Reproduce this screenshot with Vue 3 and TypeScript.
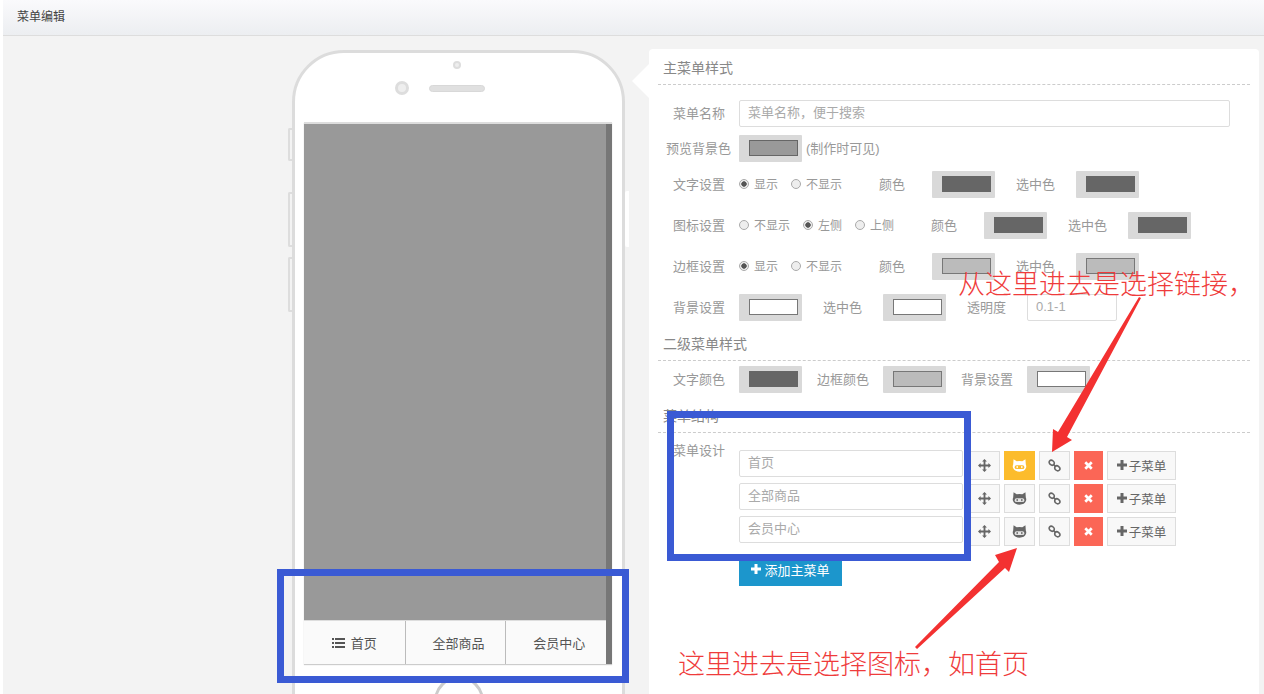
<template>
  <div class="page">
    <svg class="icon-defs" width="0" height="0">
      <symbol id="i-move" viewBox="0 0 14 14">
        <path d="M7 0 9.6 2.8H8v3.2h3.2V4.4L14 7l-2.8 2.6V8H8v3.2h1.6L7 14l-2.6-2.8H6V8H2.8v1.6L0 7l2.8-2.6V6H6V2.8H4.4z" fill="currentColor" />
      </symbol>
      <symbol id="i-cat" viewBox="0 0 16 14">
        <path d="M1.6.4 5 2.4Q8 1.9 11 2.4L14.4.4 14.8 6q.9 2 .1 3.8Q13.6 13.6 8 13.6T1.1 9.8Q.3 8 1.2 6Z" fill="currentColor" />
        <rect x="2.8" y="6.6" width="10.4" height="4.2" rx="2" fill="var(--face)" />
        <rect x="4.8" y="7.6" width="1.4" height="2.2" fill="currentColor" />
        <rect x="9.8" y="7.6" width="1.4" height="2.2" fill="currentColor" />
      </symbol>
      <symbol id="i-link" viewBox="0 0 14 14">
        <g fill="none" stroke="currentColor" stroke-width="1.7">
          <ellipse cx="4" cy="4" rx="3" ry="2.4" transform="rotate(40 4 4)" />
          <ellipse cx="10" cy="10" rx="3" ry="2.4" transform="rotate(40 10 10)" />
          <path d="M5.4 5.4 8.6 8.6" />
        </g>
      </symbol>
      <symbol id="i-times" viewBox="0 0 10 10">
        <path d="M1.4 1.4 8.6 8.6M8.6 1.4 1.4 8.6" stroke="currentColor" stroke-width="3" />
      </symbol>
      <symbol id="i-plus" viewBox="0 0 10 10">
        <path d="M5 0v10M0 5h10" stroke="currentColor" stroke-width="3" />
      </symbol>
    </svg>

    <header class="top-bar">菜单编辑</header>

    <main class="workspace">
      <div class="phone">
        <span class="side-key key-a" />
        <span class="side-key key-b" />
        <span class="side-key key-c" />
        <span class="side-key key-d" />
        <span class="phone-dot" />
        <div class="phone-ear">
          <span class="phone-camera" />
          <span class="phone-speaker" />
        </div>
        <div class="screen">
          <div class="screen-main">
            <div class="screen-canvas" />
            <nav class="phone-nav">
              <div v-for="(item, i) in navItems" :key="item" class="nav-cell">
                <svg v-if="i === 0" class="nav-list" viewBox="0 0 13 10">
                  <path d="M0 1h2M3 1h10M0 5h2M3 5h10M0 9h2M3 9h10" stroke="currentColor" stroke-width="2" />
                </svg>
                {{ item }}
              </div>
            </nav>
          </div>
          <div class="screen-scroll" />
        </div>
        <div class="home-key" />
      </div>

      <section class="panel">
        <h3 class="section-title">主菜单样式</h3>

        <div class="row row-first">
          <label class="row-label">菜单名称</label>
          <input class="text-input name-input" placeholder="菜单名称，便于搜索" />
        </div>

        <div class="row row-preview">
          <label class="row-label">预览背景色</label>
          <span class="swatch"><i :style="{ background: '#999', borderColor: '#666' }" /></span>
          <span class="hint">(制作时可见)</span>
        </div>

        <div v-for="row in styleRows" :key="row.label" class="row row-style">
          <label class="row-label">{{ row.label }}</label>
          <span v-for="opt in row.options" :key="opt.text" class="radio">
            <span :class="['radio-dot', opt.on ? 'radio-on' : '']" />{{ opt.text }}
          </span>
          <span class="txt txt-color">颜色</span>
          <span class="swatch"><i :style="{ background: row.color, borderColor: row.edge }" /></span>
          <span class="txt txt-sel">选中色</span>
          <span class="swatch"><i :style="{ background: row.color, borderColor: row.edge }" /></span>
        </div>

        <div class="row row-style">
          <label class="row-label">背景设置</label>
          <span class="swatch"><i /></span>
          <span class="txt txt-sel">选中色</span>
          <span class="swatch"><i /></span>
          <span class="txt txt-sel">透明度</span>
          <input class="text-input alpha-input" placeholder="0.1-1" />
        </div>

        <h3 class="section-title title-sub">二级菜单样式</h3>

        <div class="row row-sub">
          <label class="row-label">文字颜色</label>
          <span class="swatch"><i :style="{ background: '#666', borderColor: '#666' }" /></span>
          <span class="txt txt-sub">边框颜色</span>
          <span class="swatch"><i :style="{ background: '#bbb', borderColor: '#777' }" /></span>
          <span class="txt txt-sub">背景设置</span>
          <span class="swatch"><i /></span>
        </div>

        <h3 class="section-title title-sub">菜单结构</h3>

        <div class="design">
          <label class="row-label design-label">菜单设计</label>
          <div class="design-rows">
            <div v-for="(name, i) in navItems" :key="name" class="menu-row">
              <input class="text-input menu-input" :placeholder="name" />
              <button class="tool tool-move">
                <svg class="ico"><use href="#i-move" /></svg>
              </button>
              <button :class="['tool', i === 0 ? 'tool-active' : '']">
                <svg class="ico ico-cat"><use href="#i-cat" /></svg>
              </button>
              <button class="tool">
                <svg class="ico ico-link"><use href="#i-link" /></svg>
              </button>
              <button class="tool tool-del">
                <svg class="ico ico-small"><use href="#i-times" /></svg>
              </button>
              <button class="tool tool-sub">
                <svg class="ico ico-plus"><use href="#i-plus" /></svg>子菜单
              </button>
            </div>
            <button class="add-main">
              <svg class="ico ico-plus"><use href="#i-plus" /></svg>添加主菜单
            </button>
          </div>
        </div>
      </section>
    </main>

    <!-- 截图上的标注 -->
    <div class="mark mark-phone" />
    <div class="mark mark-menu" />
    <svg class="arrows" viewBox="0 0 1264 694" width="1264" height="694">
      <polygon points="1139,297 1141,298 1067,437 1072,440 1052,452 1053,429 1058,432" fill="#f33131" />
      <polygon points="915,647 917,649 1005,568 1009,572 1017,548 995,555 999,562" fill="#f33131" />
    </svg>
    <div class="note note-link">从这里进去是选择链接，</div>
    <div class="note note-icon">这里进去是选择图标，如首页</div>
  </div>
</template>

<script setup lang="ts">
const navItems = ["首页", "全部商品", "会员中心"];

const styleRows = [
  {
    label: "文字设置",
    options: [
      { text: "显示", on: true },
      { text: "不显示", on: false },
    ],
    color: "#666",
    edge: "#666",
  },
  {
    label: "图标设置",
    options: [
      { text: "不显示", on: false },
      { text: "左侧", on: true },
      { text: "上侧", on: false },
    ],
    color: "#666",
    edge: "#666",
  },
  {
    label: "边框设置",
    options: [
      { text: "显示", on: true },
      { text: "不显示", on: false },
    ],
    color: "#bbb",
    edge: "#777",
  },
];
</script>

<style>
html,
body {
  margin: 0;
  overflow: hidden;
}
</style>

<style scoped>
.page {
  position: relative;
  width: 1264px;
  height: 694px;
  overflow: hidden;
  box-sizing: border-box;
  border-left: 3px solid #fff;
  background: #f3f3f3;
  font-family: "Liberation Sans", "Noto Sans CJK SC", sans-serif;
  font-size: 13px;
  color: #999;
}

.icon-defs {
  position: absolute;
}

.top-bar {
  height: 36px;
  box-sizing: border-box;
  padding-left: 14px;
  line-height: 35px;
  font-size: 12px;
  color: #444;
  background: linear-gradient(#fafafc, #eceef1);
  border-bottom: 1px solid #ddd;
}

.workspace {
  display: flex;
  align-items: flex-start;
  padding: 13px 0 0 289px;
}

/* phone */
.phone {
  position: relative;
  flex: none;
  display: flex;
  flex-direction: column;
  align-items: stretch;
  box-sizing: border-box;
  width: 333px;
  height: 720px;
  margin-top: 1px;
  border: 3px solid #dcdcdc;
  border-radius: 52px 52px 0 0;
  background: #fff;
}

.side-key {
  position: absolute;
  left: -7px;
  width: 4px;
  box-sizing: border-box;
  border: 2px solid #ddd;
  border-right: none;
  border-radius: 2px 0 0 2px;
}

.key-a {
  top: 75px;
  height: 33px;
}

.key-b {
  top: 139px;
  height: 55px;
}

.key-c {
  top: 204px;
  height: 55px;
}

.key-d {
  left: auto;
  right: -7px;
  top: 138px;
  height: 56px;
  background: #fff;
  border: none;
}

.phone-dot {
  align-self: center;
  width: 8px;
  height: 8px;
  box-sizing: border-box;
  margin: 8px 4px 0 0;
  border: 2px solid #ddd;
  background: #eee;
  border-radius: 50%;
}

.phone-ear {
  display: flex;
  align-items: center;
  justify-content: center;
  gap: 20px;
  height: 16px;
  margin-top: 11px;
  padding-right: 37px;
}

.phone-camera {
  width: 14px;
  height: 14px;
  box-sizing: border-box;
  border: 3px solid #ddd;
  background: #eee;
  border-radius: 50%;
}

.phone-speaker {
  width: 56px;
  height: 7px;
  background: #e0e0e0;
  border: 1px solid #d8d8d8;
  box-sizing: border-box;
  border-radius: 4px;
}

.screen {
  display: flex;
  height: 542px;
  margin: 26px 10px 0 9px;
  box-sizing: border-box;
  border-top: 2px solid #ddd;
  box-shadow: 0 1px 1px #ccc;
}

.screen-main {
  flex: 1;
  min-width: 0;
  display: flex;
  flex-direction: column;
}

.screen-canvas {
  flex: 1;
  background: #999;
}

.phone-nav {
  display: flex;
  height: 44px;
  background: #fafafa;
  border-top: 1px solid #ddd;
  box-sizing: border-box;
  color: #555;
  font-size: 13px;
}

.nav-cell {
  flex: 0 0 33.33%;
  box-sizing: border-box;
  display: flex;
  align-items: center;
  justify-content: center;
  gap: 6px;
  padding-left: 6px;
  border-left: 1px solid #bbb;
}

.nav-cell:first-child {
  padding-left: 0;
  border-left: none;
}

.nav-list {
  width: 13px;
  height: 10px;
}

.screen-scroll {
  width: 6px;
  background: #777;
}

.home-key {
  align-self: center;
  width: 50px;
  height: 50px;
  margin-top: 12px;
  box-sizing: border-box;
  border: 3px solid #ccc;
  border-radius: 50%;
}

/* panel */
.panel {
  position: relative;
  flex: none;
  box-sizing: border-box;
  width: 610px;
  height: 660px;
  margin-left: 24px;
  padding: 0 9px;
  background: #fff;
  border-radius: 4px;
}

.panel::before {
  content: "";
  position: absolute;
  left: -17px;
  top: 15px;
  border: 17px solid transparent;
  border-left: none;
  border-right-color: #fff;
}

.section-title {
  margin: 0;
  height: 36px;
  box-sizing: border-box;
  padding: 10px 0 0 5px;
  line-height: 18px;
  font-size: 14px;
  font-weight: normal;
  color: #888;
  border-bottom: 1px dashed #ccc;
}

.title-sub {
  margin-top: 4px;
}

.row {
  display: flex;
  align-items: center;
  min-height: 27px;
}

.row-first {
  margin-top: 15px;
}

.row-preview {
  margin-top: 8px;
}

.row-style {
  margin-top: 14px;
}

.row-preview + .row-style {
  margin-top: 9px;
}

.row-sub {
  margin-top: 5px;
}

.row-label,
.txt,
.hint,
.radio {
  padding-bottom: 2px;
}

.row-label {
  flex: none;
  width: 67px;
  margin-right: 14px;
  text-align: right;
  white-space: nowrap;
}

.row-preview .row-label {
  width: 73px;
  margin-right: 8px;
}

.text-input {
  box-sizing: border-box;
  height: 27px;
  padding: 0 8px 2px;
  border: 1px solid #ddd;
  border-radius: 2px;
  background: #fff;
  font: inherit;
  color: #999;
  outline: none;
}

.text-input::placeholder {
  color: #aaa;
}

.name-input {
  width: 491px;
}

.alpha-input {
  width: 90px;
}

.swatch {
  flex: none;
  display: block;
  width: 63px;
  height: 27px;
  box-sizing: border-box;
  padding: 5px 4px 6px 10px;
  background: #d9d9d9;
  border-radius: 1px;
}

.swatch i {
  display: block;
  height: 100%;
  box-sizing: border-box;
  border: 1px solid #777;
  background: #fff;
}

.hint {
  margin-left: 4px;
}

.radio {
  display: flex;
  align-items: center;
  margin-right: 13px;
  white-space: nowrap;
  font-size: 12px;
}

.radio-dot {
  width: 10px;
  height: 10px;
  box-sizing: border-box;
  margin-right: 5px;
  border: 1px solid #aaa;
  border-radius: 50%;
  background: #eee;
}

.radio-on {
  background: radial-gradient(circle, #555 0 2.4px, #eee 3px);
}

.txt {
  white-space: nowrap;
}

.txt-color {
  margin: 0 27px 0 24px;
}

.txt-sel {
  margin: 0 21px;
}

.txt-sub {
  margin: 0 14px 0 15px;
}

.design {
  display: flex;
  margin-top: 10px;
}

.design-label {
  line-height: 16px;
}

.design-rows {
  display: flex;
  flex-direction: column;
  margin-top: 7px;
}

.menu-row {
  display: flex;
  gap: 4px;
  height: 33px;
}

.menu-input {
  width: 224px;
  margin-right: 2px;
}

.tool {
  display: flex;
  align-items: center;
  justify-content: center;
  width: 31px;
  height: 29px;
  margin-top: 1px;
  padding: 0 0 1px;
  box-sizing: border-box;
  border: 1px solid #ddd;
  background: #f8f8f8;
  color: #666;
  font: inherit;
  --face: #e4e4e4;
}

.tool-active {
  background: #fcbc2c;
  border-color: #fcbc2c;
  color: #fff;
  --face: #fcbc2c;
}

.tool-del {
  width: 29px;
  background: #fb6656;
  border-color: #fb6656;
  color: #fff;
}

.tool-sub {
  width: 69px;
  gap: 2px;
  font-size: 12.5px;
}

.ico {
  width: 13px;
  height: 13px;
}

.ico-cat {
  width: 15px;
  height: 13px;
}

.ico-small {
  width: 9px;
  height: 9px;
}

.ico-plus {
  width: 10px;
  height: 10px;
}

.add-main {
  display: flex;
  align-items: center;
  justify-content: center;
  gap: 3px;
  width: 103px;
  height: 32px;
  margin-top: 5px;
  padding: 0 0 2px;
  border: none;
  background: #1c96cc;
  color: #fff;
  font: inherit;
}

/* annotations drawn on top of the screenshot */
.mark {
  position: absolute;
  box-sizing: border-box;
  border: 7px solid #3a5ad4;
}

.mark-phone {
  left: 274px;
  top: 569px;
  width: 352px;
  height: 114px;
}

.mark-menu {
  left: 664px;
  top: 411px;
  width: 304px;
  height: 150px;
}

.arrows {
  position: absolute;
  left: -3px;
  top: 0;
  pointer-events: none;
}

.note {
  position: absolute;
  color: #ef3b3b;
  white-space: nowrap;
  line-height: 32px;
  font-weight: 300;
}

.note-link {
  left: 955px;
  top: 269px;
  font-size: 27px;
}

.note-icon {
  left: 675px;
  top: 649px;
  font-size: 27px;
}
</style>
